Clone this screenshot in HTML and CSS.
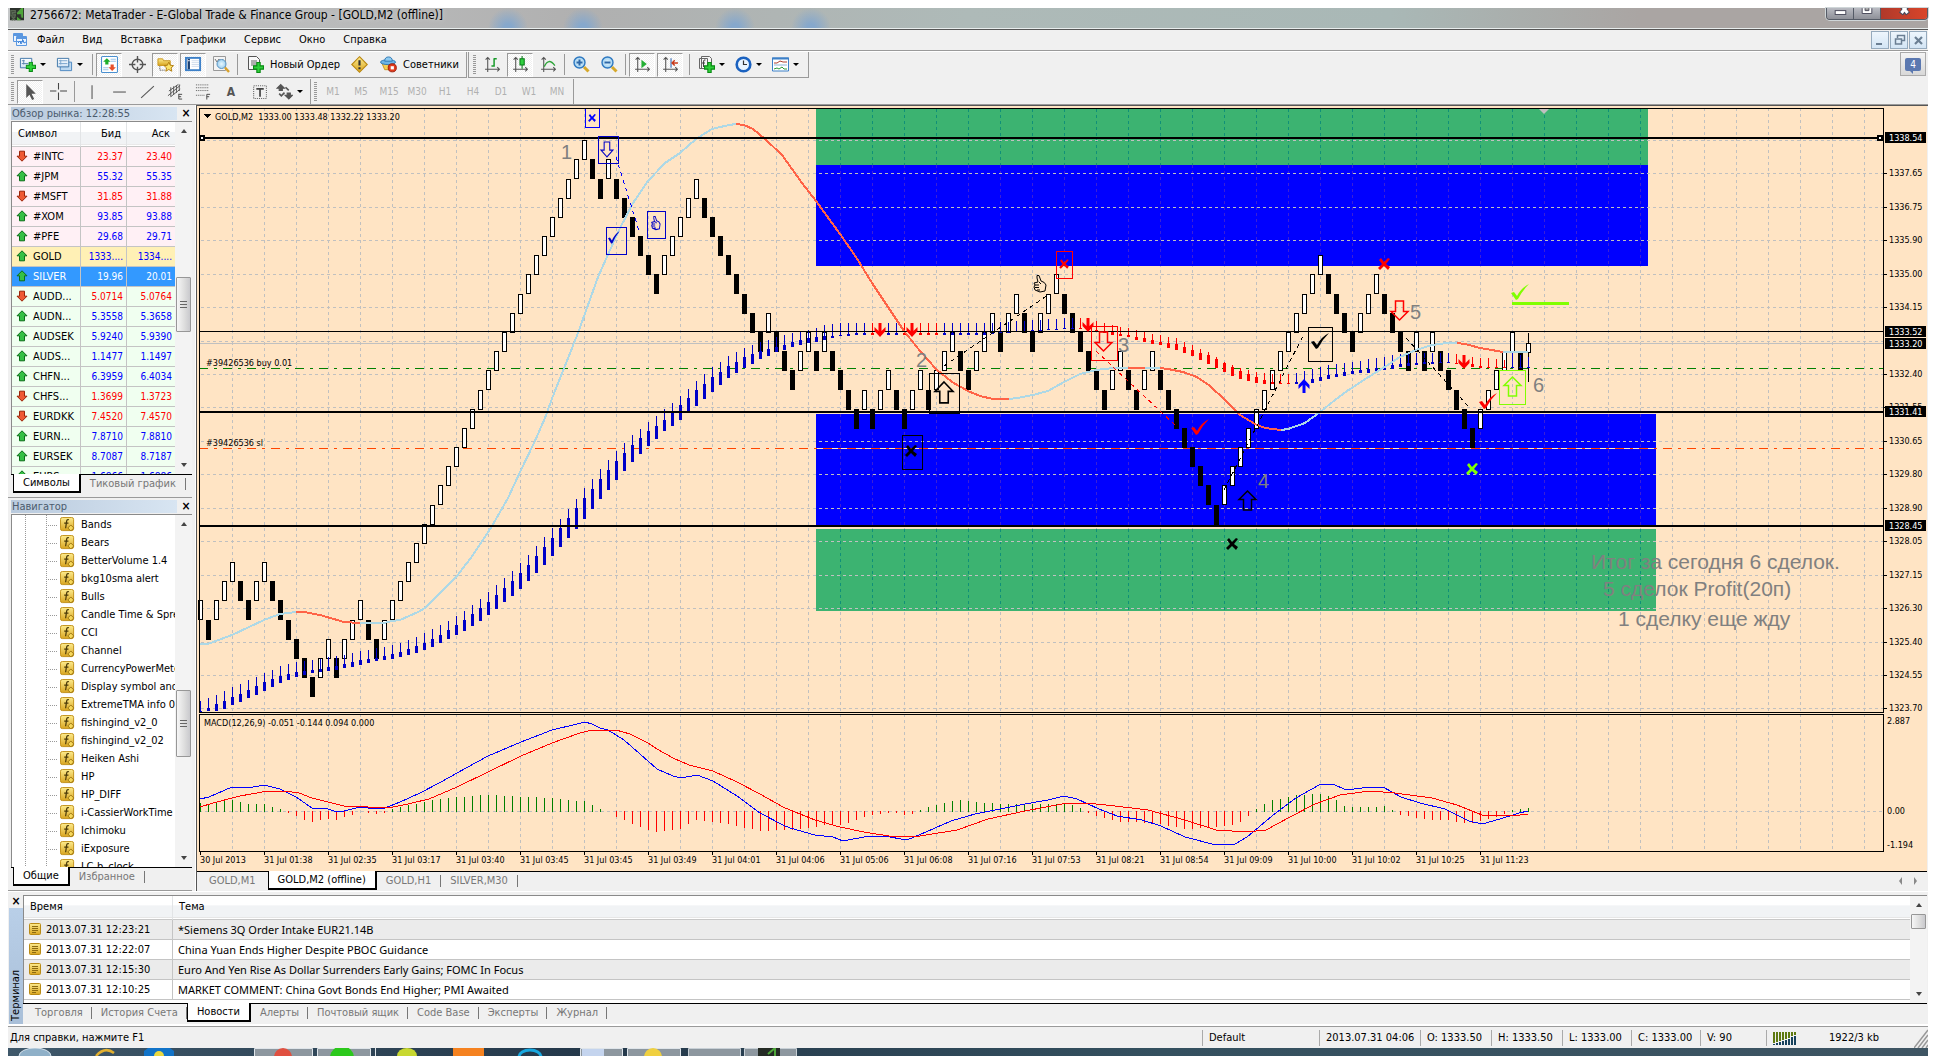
FILE: index.html
```html
<!DOCTYPE html>
<html lang="ru">
<head>
<meta charset="utf-8">
<title>2756672: MetaTrader - E-Global Trade &amp; Finance Group - [GOLD,M2 (offline)]</title>
<link rel="stylesheet" href="styles.css">
</head>
<body>
<svg class="defs" aria-hidden="true">
  <defs>
    <linearGradient id="gold" x1="0" y1="0" x2="0" y2="1"><stop offset="0" stop-color="#fdeb8c"/><stop offset="1" stop-color="#d9a520"/></linearGradient>
    <linearGradient id="pane" x1="0" y1="0" x2="0" y2="1"><stop offset="0" stop-color="#fff"/><stop offset="1" stop-color="#cfe2f5"/></linearGradient>
    <radialGradient id="lens"><stop offset="0" stop-color="#e8f8ff"/><stop offset="1" stop-color="#9fd0f0"/></radialGradient>
    <symbol id="plus" viewBox="0 0 10 10"><path d="M3.5 .5h3v3h3v3h-3v3h-3v-3h-3v-3h3z" fill="#2ed13a" stroke="#0a8a14"/></symbol>
    <symbol id="i-app" viewBox="0 0 16 16"><path d="M0 0h16v14H0z" fill="#2c322c"/><path d="M1 3h5v2H3v2h3v2H1zM8 6l5-5v9M2 10l4 4M6 10l-4 4" fill="none" stroke="#5a6a55" stroke-width="1.5"/><path d="M8 6l5-6h2v11h-2V7H8zM8 10v4h5" fill="#4ea63a"/></symbol>
    <symbol id="i-doc" viewBox="0 0 16 16"><path d="M1.500 1.500h9v8h-9zM4.500 4.500h10v9h-10z" fill="#eaf4ff" stroke="#5a97e0"/><path d="M1 3h10M4 6h11" stroke="#5a97e0" stroke-width="2"/><path d="M6 11l2-2 1 3 2-4 1 3 2-1" fill="none" stroke="#3c82d8"/></symbol>
    <symbol id="i-new" viewBox="0 0 18 16"><path d="M1.500 1.500h12v10h-12z" fill="url(#pane)" stroke="#3d75a8"/><path d="M3 4h3M5 3v5M3 7h7" stroke="#5a86b0" fill="none"/><use href="#plus" x="7" y="5" width="11" height="11"/></symbol>
    <symbol id="i-prof" viewBox="0 0 18 16"><path d="M4.500 5.500h12v9h-12z" fill="#bcd8f0" stroke="#4a86c0"/><path d="M1.500 1.500h12v9h-12z" fill="url(#pane)" stroke="#3d75a8"/><path d="M3 4h9M5 3v5M3 7h9" stroke="#7aa5cc" fill="none"/></symbol>
    <symbol id="i-mw" viewBox="0 0 16 16"><rect x=".5" y=".5" width="15" height="15" rx="1" fill="#fff" stroke="#4a90d0"/><path d="M9 3h5M9 5h5M2 11h5M2 13h5" stroke="#9cc4e8"/><path d="M5.500 2l3.500 3.500H7V8H4V5.500H2z" fill="#1fae2c"/><path d="M10.500 14L7 10.500h2V8h3v2.500h2z" fill="#e8502a"/></symbol>
    <symbol id="i-cross" viewBox="0 0 16 16"><circle cx="8" cy="8" r="5" fill="none" stroke="#555" stroke-width="1.300"/><path d="M8 0v6M8 10v6M0 8h6M10 8h6" stroke="#555" stroke-width="1.300"/></symbol>
    <symbol id="i-fold" viewBox="0 0 18 16"><path d="M1 2h5l1 2h7v5H1z" fill="url(#gold)" stroke="#c8941a"/><path d="M3 10v4h5" fill="none" stroke="#333" stroke-dasharray="1 1"/><path d="M12.500 5.500l1.500 3.300 3.500.4-2.600 2.400.8 3.500-3.200-1.800-3.200 1.800.8-3.500L7.500 9.200l3.500-.4z" fill="#fbe36a" stroke="#b07c10"/></symbol>
    <symbol id="i-nav" viewBox="0 0 18 16"><rect x="1" y="1" width="15" height="13" fill="#fff" stroke="#3d80c8" stroke-width="2"/><path d="M4 2v11" stroke="#1a3f70" stroke-width="2.500"/><path d="M7 4h8M7 6h8M7 8h8M7 10h8" stroke="#cfdcec"/><path d="M3 4h2" stroke="#fff"/></symbol>
    <symbol id="i-tester" viewBox="0 0 17 17"><path d="M.5.5h12v14H.5z" fill="#f4f4f4" stroke="#999"/><path d="M2 3l2 3 2-3 2 4 2-4" fill="none" stroke="#777"/><circle cx="8.500" cy="8" r="4.500" fill="url(#lens)" stroke="#5c96c4"/><path d="M12 11.500l4 4.500" stroke="#d9a12a" stroke-width="2.400"/></symbol>
    <symbol id="i-order" viewBox="0 0 17 17"><path d="M1.500.5h8l3 3v10h-11z" fill="#f8f8f8" stroke="#555"/><path d="M4 5h6M4 7h6M4 9h6" stroke="#666"/><use href="#plus" x="6" y="6" width="11" height="11"/></symbol>
    <symbol id="i-warn" viewBox="0 0 16 16"><path d="M8 .7L15.300 8 8 15.300.7 8z" fill="url(#gold)" stroke="#b98712"/><path d="M7 4h2v5H7zM7 10.500h2v2H7z" fill="#333"/></symbol>
    <symbol id="i-adv" viewBox="0 0 18 17"><path d="M2 7l3 7h8l2-7z" fill="#f5cf55" stroke="#c9971e"/><ellipse cx="8.500" cy="6" rx="8" ry="2.600" fill="#6db4e4" stroke="#2f78b4"/><path d="M5 5q0-4.500 4-4.500T13 5z" fill="#8dcaf0" stroke="#2f78b4"/><circle cx="13" cy="12" r="4.300" fill="#e03a1c" stroke="#9c1c08"/><path d="M11.300 10.300h3.400v3.400h-3.400z" fill="#fff"/></symbol>
    <symbol id="axes" viewBox="0 0 16 16"><path d="M3.500 1v14M1 12.500h14M1.500 3.500l2-2 2 2M12.500 10.500l2 2-2 2" fill="none" stroke="#555"/></symbol>
    <symbol id="i-bars" viewBox="0 0 16 16"><use href="#axes"/><path d="M9.500 2v8M7 9.500h2.500M9.500 2.500H12" stroke="#189a2a" stroke-width="1.400"/></symbol>
    <symbol id="i-candle" viewBox="0 0 16 16"><use href="#axes"/><path d="M9.500 0v12" stroke="#0b7a1a"/><path d="M7.500 2.500h4v6h-4z" fill="#2fd03f" stroke="#0b7a1a"/></symbol>
    <symbol id="i-line" viewBox="0 0 16 16"><use href="#axes"/><path d="M4 10q4-9 10-1" fill="none" stroke="#2fa53a" stroke-width="1.300"/></symbol>
    <symbol id="lens-b" viewBox="0 0 17 17"><circle cx="6.500" cy="6.500" r="5.500" fill="url(#lens)" stroke="#2e78c0" stroke-width="1.400"/><path d="M11 11l4.500 4.500" stroke="#d6a82a" stroke-width="3"/></symbol>
    <symbol id="i-zin" viewBox="0 0 17 17"><use href="#lens-b"/><path d="M6.500 3.500v6M3.500 6.500h6" stroke="#2e68a8" stroke-width="2"/></symbol>
    <symbol id="i-zout" viewBox="0 0 17 17"><use href="#lens-b"/><path d="M3.500 6.500h6" stroke="#2e68a8" stroke-width="2"/></symbol>
    <symbol id="i-scroll" viewBox="0 0 16 16"><use href="#axes"/><path d="M7 3.500l5 4-5 4z" fill="#25b035"/></symbol>
    <symbol id="i-shift" viewBox="0 0 16 16"><use href="#axes"/><path d="M8.500 2v9" stroke="#2a62b0"/><path d="M15 6.500h-5M12 4l-2.500 2.500L12 9" fill="none" stroke="#c83a1a" stroke-width="1.400"/></symbol>
    <symbol id="i-ind" viewBox="0 0 17 17"><path d="M3.500.5h8l2 2v10h-10zM1.500 2.500h8v10h-8z" fill="#f6f6f6" stroke="#666"/><path d="M7.500 4q-2-1-2 2v5M4 7h3" fill="none" stroke="#444"/><use href="#plus" x="6" y="6" width="11" height="11"/></symbol>
    <symbol id="i-clock" viewBox="0 0 17 17"><circle cx="8.500" cy="8.500" r="6.800" fill="#eaf5ff" stroke="#1b62c0" stroke-width="2.600"/><path d="M8.500 4.500v4h3.500" fill="none" stroke="#333" stroke-width="1.200"/></symbol>
    <symbol id="i-tpl" viewBox="0 0 17 16"><path d="M.5 1.500h16v13H.5z" fill="#fff" stroke="#3d80c8"/><path d="M0 2h17" stroke="#3d80c8" stroke-width="2"/><path d="M2 8.500h13" stroke="#8fb4d8"/><path d="M2 6.500h3l3-2 3 1h4" fill="none" stroke="#b04030"/><path d="M2 12.500l3-1 2 1 3-2 2 2h3" fill="none" stroke="#2c9a3a"/></symbol>
    <symbol id="i-cur" viewBox="0 0 16 16"><path d="M4 1l9 9H9l2.500 5-2 1L7 11l-3 3z" fill="#555"/></symbol>
    <symbol id="i-ch" viewBox="0 0 16 16"><path d="M8 0v6M8 9v7M0 7.500h6M9.500 7.500H16" stroke="#444"/></symbol>
    <symbol id="i-vl" viewBox="0 0 16 16"><path d="M8.500 2v13" stroke="#555"/></symbol>
    <symbol id="i-hl" viewBox="0 0 16 16"><path d="M2 8.500h12" stroke="#555"/></symbol>
    <symbol id="i-tl" viewBox="0 0 16 16"><path d="M2 14L14 3" stroke="#555"/></symbol>
    <symbol id="i-chan" viewBox="0 0 18 17"><path d="M1 13L14 2M2 8L12 1M4 14L14 6M4 4v10M7 3v9M10 2v8M13 1v7" stroke="#555" fill="none"/><path d="M12.500 11v5.500H16M12.500 11.500H16M12.500 14H15" stroke="#444" fill="none"/></symbol>
    <symbol id="i-fib" viewBox="0 0 18 17"><path d="M1 1.500h13M1 4.500h13M1 7.500h13M1 12.500h9" stroke="#555" stroke-dasharray="1 1"/><path d="M12.500 17v-5.500H16M12.500 14H15" stroke="#444" fill="none"/></symbol>
    <symbol id="i-lab" viewBox="0 0 16 16"><path d="M2.500 2.500h12v12h-12z" fill="none" stroke="#666" stroke-dasharray="1 1"/><path d="M5 5.500h7M8.500 5v8" stroke="#444" stroke-width="1.600"/></symbol>
    <symbol id="i-arr" viewBox="0 0 16 16"><path d="M4.500 1.500L8 5H6v2H3V5H1zM12 15l-3.500-3.500h2v-2h3v2h2z" fill="#555" stroke="#555"/><path d="M3 10l2 2 3-3M9 4l3 3" fill="none" stroke="#555" stroke-width="1.500"/></symbol>
    <symbol id="up" viewBox="0 0 12 12"><path d="M6 .8l5 5H8.500v5h-5v-5H1z" fill="#35c045" stroke="#0b6e18"/></symbol>
    <symbol id="dn" viewBox="0 0 12 12"><path d="M6 11.200l5-5H8.500v-5h-5v5H1z" fill="#ef5a35" stroke="#9a2408"/></symbol>
    <symbol id="fx" viewBox="0 0 16 16"><rect x=".5" y=".5" width="14" height="14" rx="2" fill="url(#gold)" stroke="#c08f16"/><path d="M9.500 3Q7.500 2 7 5L6 12M4.500 6.500h4.500" fill="none" stroke="#4a3a08" stroke-width="1.300"/><path d="M11.500 8.500l3.200 3.200-3.200 3.200-3.200-3.200z" fill="#f6d75a" stroke="#96700e"/></symbol>
    <symbol id="note" viewBox="0 0 12 12"><rect x=".5" y=".5" width="11" height="11" rx="1" fill="url(#gold)" stroke="#b98a14"/><path d="M3 3.500h6M3 5.500h6M3 7.500h6M3 9.500h4" stroke="#8c6a10"/></symbol>
  </defs>
</svg>

<div class="window">
  <header class="titlebar">
    <svg class="appicon"><use href="#i-app"/></svg>
    <h1>2756672: MetaTrader - E-Global Trade &amp; Finance Group - [GOLD,M2 (offline)]</h1>
    <div class="caption">
      <button aria-label="Свернуть"><svg viewBox="0 0 27 11"><rect x="8.500" y="2.500" width="11" height="4" fill="#fff" stroke="#4a4a5a"/></svg></button>
      <button aria-label="Развернуть"><svg viewBox="0 0 27 11"><path d="M8.500 0v5.500h10V0" fill="#fff" stroke="#4a4a5a"/><path d="M11.500 0v2.500h4V0" fill="#999" stroke="#4a4a5a"/></svg></button>
      <button class="close" aria-label="Закрыть"><svg viewBox="0 0 46 11"><path d="M20 -3l7 9M27 -3l-7 9" stroke="#4a4a5a" stroke-width="5"/><path d="M20.500 -3l6 8M26.500 -3l-6 8" stroke="#fff" stroke-width="3"/></svg></button>
    </div>
  </header>

  <nav class="menubar">
    <svg class="docicon"><use href="#i-doc"/></svg>
    <button>Файл</button><button>Вид</button><button>Вставка</button><button>Графики</button><button>Сервис</button><button>Окно</button><button>Справка</button>
    <div class="mdi">
      <button aria-label="Свернуть график"><svg viewBox="0 0 16 16"><path d="M4 11h6v2H4z" fill="#6b7f93"/></svg></button>
      <button aria-label="Восстановить график"><svg viewBox="0 0 16 16"><path d="M6.500 6V3.500h7v5H11M4.500 7h6v5h-6z" fill="none" stroke="#6b7f93" stroke-width="1.500"/></svg></button>
      <button aria-label="Закрыть график"><svg viewBox="0 0 16 16"><path d="M5 5l7 7M12 5l-7 7" stroke="#6b7f93" stroke-width="2.200"/></svg></button>
    </div>
  </nav>

  <div class="bars">
    <div class="barrows">
      <div class="row">
        <div class="toolbar main-tb"><i class="grip"></i>
          <button class="dd" aria-label="Новый график"><svg><use href="#i-new"/></svg></button>
          <button class="dd" aria-label="Профили"><svg><use href="#i-prof"/></svg></button><i class="sep"></i>
          <button class="on" aria-label="Обзор рынка"><svg><use href="#i-mw"/></svg></button>
          <button aria-label="Окно данных"><svg><use href="#i-cross"/></svg></button>
          <button class="on" aria-label="Навигатор"><svg><use href="#i-fold"/></svg></button>
          <button class="on" aria-label="Терминал"><svg><use href="#i-nav"/></svg></button>
          <button aria-label="Тестер стратегий"><svg><use href="#i-tester"/></svg></button><i class="sep"></i>
          <button class="txt"><svg><use href="#i-order"/></svg>Новый Ордер</button>
          <button aria-label="MetaEditor"><svg><use href="#i-warn"/></svg></button>
          <button class="txt"><svg><use href="#i-adv"/></svg>Советники</button>
        </div>
        <div class="toolbar chart-tb"><i class="grip"></i>
          <button aria-label="Бары"><svg><use href="#i-bars"/></svg></button>
          <button class="on" aria-label="Свечи"><svg><use href="#i-candle"/></svg></button>
          <button aria-label="Линия"><svg><use href="#i-line"/></svg></button><i class="sep"></i>
          <button aria-label="Приблизить"><svg><use href="#i-zin"/></svg></button>
          <button aria-label="Отдалить"><svg><use href="#i-zout"/></svg></button><i class="sep"></i>
          <button class="on" aria-label="Автопрокрутка"><svg><use href="#i-scroll"/></svg></button>
          <button class="on" aria-label="Сдвиг графика"><svg><use href="#i-shift"/></svg></button><i class="sep"></i>
          <button class="dd" aria-label="Индикаторы"><svg><use href="#i-ind"/></svg></button>
          <button class="dd" aria-label="Периоды"><svg><use href="#i-clock"/></svg></button>
          <button class="dd" aria-label="Шаблоны"><svg><use href="#i-tpl"/></svg></button>
        </div>
      </div>
      <div class="row second">
        <div class="toolbar draw-tb"><i class="grip"></i>
          <button class="on" aria-label="Курсор"><svg><use href="#i-cur"/></svg></button>
          <button aria-label="Перекрестие"><svg><use href="#i-ch"/></svg></button><i class="sep"></i>
          <button aria-label="Вертикальная линия"><svg><use href="#i-vl"/></svg></button>
          <button aria-label="Горизонтальная линия"><svg><use href="#i-hl"/></svg></button>
          <button aria-label="Трендовая линия"><svg><use href="#i-tl"/></svg></button>
          <button aria-label="Канал"><svg><use href="#i-chan"/></svg></button>
          <button aria-label="Фибоначчи"><svg><use href="#i-fib"/></svg></button>
          <button class="letter">A</button>
          <button aria-label="Метка"><svg><use href="#i-lab"/></svg></button>
          <button class="dd" aria-label="Стрелки"><svg><use href="#i-arr"/></svg></button>
        </div>
        <div class="toolbar tf-tb"><i class="grip"></i>
          <button>M1</button><button>M5</button><button>M15</button><button>M30</button><button>H1</button><button>H4</button><button>D1</button><button>W1</button><button>MN</button>
        </div>
      </div>
    </div>
    <button class="msg" aria-label="Сообщения"><span>4</span></button>
  </div>

  <main class="work">
    <aside class="side">
      <section class="dock">
        <div class="docktitle"><h2>Обзор рынка: 12:28:55</h2><button aria-label="Закрыть">×</button></div>
        <div class="dockbody">
          <div class="list market">
            <table>
              <thead><tr><th>Символ</th><th>Бид</th><th>Аск</th></tr></thead>
              <tbody>
                <tr class="st d"><td><svg><use href="#dn"/></svg>#INTC</td><td>23.37</td><td>23.40</td></tr>
                <tr class="st"><td><svg><use href="#up"/></svg>#JPM</td><td>55.32</td><td>55.35</td></tr>
                <tr class="st d"><td><svg><use href="#dn"/></svg>#MSFT</td><td>31.85</td><td>31.88</td></tr>
                <tr class="st"><td><svg><use href="#up"/></svg>#XOM</td><td>93.85</td><td>93.88</td></tr>
                <tr class="st"><td><svg><use href="#up"/></svg>#PFE</td><td>29.68</td><td>29.71</td></tr>
                <tr class="au"><td><svg><use href="#up"/></svg>GOLD</td><td>1333....</td><td>1334....</td></tr>
                <tr class="sel"><td><svg><use href="#up"/></svg>SILVER</td><td>19.96</td><td>20.01</td></tr>
                <tr class="d"><td><svg><use href="#dn"/></svg>AUDD...</td><td>5.0714</td><td>5.0764</td></tr>
                <tr><td><svg><use href="#up"/></svg>AUDN...</td><td>5.3558</td><td>5.3658</td></tr>
                <tr><td><svg><use href="#up"/></svg>AUDSEK</td><td>5.9240</td><td>5.9390</td></tr>
                <tr><td><svg><use href="#up"/></svg>AUDS...</td><td>1.1477</td><td>1.1497</td></tr>
                <tr><td><svg><use href="#up"/></svg>CHFN...</td><td>6.3959</td><td>6.4034</td></tr>
                <tr class="d"><td><svg><use href="#dn"/></svg>CHFS...</td><td>1.3699</td><td>1.3723</td></tr>
                <tr class="d"><td><svg><use href="#dn"/></svg>EURDKK</td><td>7.4520</td><td>7.4570</td></tr>
                <tr><td><svg><use href="#up"/></svg>EURN...</td><td>7.8710</td><td>7.8810</td></tr>
                <tr><td><svg><use href="#up"/></svg>EURSEK</td><td>8.7087</td><td>8.7187</td></tr>
                <tr><td><svg><use href="#up"/></svg>EURS...</td><td>1.6866</td><td>1.6886</td></tr>
              </tbody>
            </table>
          </div>
          <div class="scroll"><i class="ar u"></i><i class="space a"></i><i class="thumb"></i><i class="space b"></i><i class="ar"></i></div>
        </div>
        <div class="tabs"><button class="act">Символы</button><button>Тиковый график</button></div>
      </section>
      <section class="dock nav">
        <div class="docktitle"><h2>Навигатор</h2><button aria-label="Закрыть">×</button></div>
        <div class="dockbody">
          <ul class="list tree">
            <li><svg><use href="#fx"/></svg>Bands</li><li><svg><use href="#fx"/></svg>Bears</li><li><svg><use href="#fx"/></svg>BetterVolume 1.4</li><li><svg><use href="#fx"/></svg>bkg10sma alert</li><li><svg><use href="#fx"/></svg>Bulls</li><li><svg><use href="#fx"/></svg>Candle Time &amp; Spread</li><li><svg><use href="#fx"/></svg>CCI</li><li><svg><use href="#fx"/></svg>Channel</li><li><svg><use href="#fx"/></svg>CurrencyPowerMeter</li><li><svg><use href="#fx"/></svg>Display symbol and</li><li><svg><use href="#fx"/></svg>ExtremeTMA info 01</li><li><svg><use href="#fx"/></svg>fishingind_v2_0</li><li><svg><use href="#fx"/></svg>fishingind_v2_02</li><li><svg><use href="#fx"/></svg>Heiken Ashi</li><li><svg><use href="#fx"/></svg>HP</li><li><svg><use href="#fx"/></svg>HP_DIFF</li><li><svg><use href="#fx"/></svg>i-CassierWorkTime</li><li><svg><use href="#fx"/></svg>Ichimoku</li><li><svg><use href="#fx"/></svg>iExposure</li><li><svg><use href="#fx"/></svg>LC-b_clock</li>
          </ul>
          <div class="scroll"><i class="ar u"></i><i class="space a"></i><i class="thumb"></i><i class="space b"></i><i class="ar"></i></div>
        </div>
        <div class="tabs"><button class="act">Общие</button><button>Избранное</button></div>
      </section>
    </aside>
    <section class="chartcol">
      <svg id="chart" role="img" aria-label="GOLD,M2"></svg>
      <div class="tabs charttabs"><button>GOLD,M1</button><button class="act">GOLD,M2 (offline)</button><button>GOLD,H1</button><button>SILVER,M30</button><span class="pager"><svg viewBox="0 0 20 8"><path d="M4 0v8L1 4zM16 0v8l3-4z" fill="#888"/></svg></span></div>
    </section>
  </main>

  <section class="terminal">
    <div class="rail"><button aria-label="Закрыть">×</button><h2>Терминал</h2></div>
    <div class="termcol">
      <div class="dockbody">
        <div class="list news">
          <table>
            <thead><tr><th>Время</th><th>Тема</th></tr></thead>
            <tbody>
              <tr><td><svg><use href="#note"/></svg>2013.07.31 12:23:21</td><td>*Siemens 3Q Order Intake EUR21.14B</td></tr>
              <tr><td><svg><use href="#note"/></svg>2013.07.31 12:22:07</td><td>China Yuan Ends Higher Despite PBOC Guidance</td></tr>
              <tr><td><svg><use href="#note"/></svg>2013.07.31 12:15:30</td><td>Euro And Yen Rise As Dollar Surrenders Early Gains; FOMC In Focus</td></tr>
              <tr><td><svg><use href="#note"/></svg>2013.07.31 12:10:25</td><td>MARKET COMMENT: China Govt Bonds End Higher; PMI Awaited</td></tr>
            </tbody>
          </table>
        </div>
        <div class="scroll"><i class="ar u"></i><i class="thumb"></i><i class="space b"></i><i class="ar"></i></div>
      </div>
      <div class="tabs termtabs"><button>Торговля</button><button>История Счета</button><button class="act">Новости</button><button>Алерты</button><button>Почтовый ящик</button><button>Code Base</button><button>Эксперты</button><button>Журнал</button></div>
    </div>
  </section>

  <footer class="status">
    <span class="help">Для справки, нажмите F1</span>
    <span class="c1">Default</span><span class="c2">2013.07.31 04:06</span><span class="c3">O: 1333.50</span><span class="c3">H: 1333.50</span><span class="c4">L: 1333.00</span><span class="c4">C: 1333.00</span><span class="c5">V: 90</span>
    <span class="c6"><svg viewBox="0 0 24 13"><path d="M1 0v11M4 0v10M7 0v9M10 0v8M13 0v7M16 0v6M19 0v4M22 0v3" stroke="#5f7a10" stroke-width="2"/><path d="M1 12v1M4 11v2M7 10v3M10 9v4M13 8v5M16 7v6M19 5v8M22 4v9" stroke="#17425c" stroke-width="2"/></svg>1922/3 kb</span>
    <svg class="size" viewBox="0 0 14 20"><path d="M0 20L14 2M4 20L14 7M8 20L14 12M12 20L14 17" stroke="#999" stroke-width="1.500"/></svg>
  </footer>
  <div class="taskbar">
    <svg width="700" height="8"><ellipse cx="27" cy="8" rx="16" ry="8" fill="#8fb0c8" stroke="#d5e2ec"/><path d="M88 8q9-10 18-3" fill="none" stroke="#e2b030" stroke-width="2.500"/><path d="M136 8V3l4-3h22l4 3v5z" fill="#1173c8"/><circle cx="151" cy="8" r="5" fill="#e9d840"/><path d="M246.500 8V.5h58V8M309.500 8V.5h53V8M367.500 0v8M572.500 8V.5h42V8M619.500 8V.5h53V8" fill="#8d979f" stroke="#dfe5ea"/><circle cx="275" cy="9" r="9" fill="#e05040"/><circle cx="334" cy="10" r="12" fill="#2cc81c"/><ellipse cx="399" cy="8" rx="10" ry="8" fill="#c8d830"/><path d="M445 0h31v8h-31z" fill="#f58220"/><ellipse cx="522" cy="9" rx="11" ry="7" fill="none" stroke="#18a8e0" stroke-width="3"/><path d="M574 8V1h22v7z" fill="#c4d4ee"/><circle cx="645" cy="9" r="9" fill="#f0d040"/></svg>
    <svg width="160" height="8"><path d="M.5 8V.5h52V8M56.500 8V.5h52V8" fill="#8d979f" stroke="#c8d0d6"/><path d="M70 8V0h22v8z" fill="#252b25"/><path d="M80 6l7-6v8" stroke="#4ea63a" stroke-width="2" fill="none"/></svg>
  </div>
</div>
<script src="chart.js"></script>
</body>
</html>
```
FILE: styles.css
```css
*{box-sizing:border-box}
body{margin:0;background:#fff;font:11px/14px "DejaVu Sans Condensed","Noto Sans",sans-serif;color:#000}
button{font:inherit;color:inherit;background:none;border:0;padding:0;margin:0;white-space:nowrap}
h1,h2,ul{margin:0;padding:0;font-size:inherit;font-weight:normal}
.defs{position:absolute;width:0;height:0}
.window{display:flex;flex-direction:column;padding:8px 8px 0}
.titlebar{display:flex;align-items:flex-start;height:21px;padding-left:1px;border-bottom:1px solid #e8eded;
  background:
  radial-gradient(circle at 500px 20px,#86a8cc 4px,transparent 20px),radial-gradient(circle at 575px 20px,#86a8cc 4px,transparent 20px),
  radial-gradient(circle at 727px 20px,#86a8cc 4px,transparent 20px),radial-gradient(circle at 803px 20px,#86a8cc 4px,transparent 20px),
  radial-gradient(ellipse at 198px 22px,#5b5f62 4px,transparent 20px),radial-gradient(ellipse at 417px 22px,#a05a60 6px,transparent 20px),
  radial-gradient(ellipse at 1482px 20px,#6d8385 4px,transparent 18px),radial-gradient(ellipse at 1560px 20px,#94aed4 4px,transparent 18px),radial-gradient(ellipse at 1632px 20px,#5a6a70 3px,transparent 14px),
  linear-gradient(90deg,#c6c8c9,#b0b0b0 30%,#aebab8 50%,#a9b8b6 72%,#aaa5a3 85%,#aaa5a3)}
.appicon{width:16px;height:14px;flex:none}
.titlebar h1{font-size:12px;line-height:15px;padding-left:5px;white-space:nowrap;flex:1;text-shadow:0 0 4px #ddd}
.caption{display:flex;border:1px solid #555b66;border-top:0;border-radius:0 0 4px 4px;overflow:hidden;box-shadow:0 0 0 1px #cfd6d8}
.caption button{width:27px;height:11px;background:linear-gradient(#b9bbc2,#8e9098);border-right:1px solid #555b66}
.caption .close{width:46px;border:0;background:linear-gradient(90deg,#b0392a,#d9452a)}
.caption svg{display:block;width:100%;height:11px}
.menubar{display:flex;align-items:center;height:22px;padding:0 1px 0 4px;background:#f0f0f0;border-top:1px solid #555;border-bottom:1px solid #9a9a9a}
.docicon{width:16px;height:16px;margin-right:2px}
.menubar>button{padding:0 9px;height:18px}
.menubar>button:nth-of-type(1){padding-left:7px}
.mdi{display:flex;gap:1px;margin-left:auto}
.mdi button{width:18px;height:18px;border:1px solid #95aabd;background:linear-gradient(#eef6fd,#d3e5f5)}
.mdi svg{display:block;width:16px;height:16px}
.bars{display:flex;justify-content:space-between;align-items:flex-start;background:#f0f0f0;border-top:1px solid #fff;border-bottom:1px solid #9a9a9a}
.row{display:flex}
.toolbar{display:flex;align-items:center;height:26px;border-right:1px solid #9a9a9a;border-bottom:1px solid #9a9a9a}
.second{padding-top:1px}
.second .toolbar{height:25px;border-bottom:0}
.main-tb{width:459px}
.chart-tb{border-left:1px solid #9a9a9a;margin-left:1px;padding-right:2px}
.tf-tb{padding-right:2px}
.grip{width:3px;height:20px;margin:0 2px 0 3px;background:repeating-linear-gradient(#999 0 1px,transparent 1px 2px)}
.chart-tb .grip{margin-left:4px}
.sep{width:1px;height:21px;margin:0 2px;background:#999}
.chart-tb .sep:last-of-type{margin:0 5px}
.toolbar button{width:28px;height:24px;display:flex;align-items:center;justify-content:center;flex:none}
.toolbar svg{width:17px;height:17px;flex:none}
.toolbar button.on{width:26px;margin:0 1px;border:1px solid;border-color:#999 #fff #fff #999;background:repeating-conic-gradient(#fff 0 25%,#f0f0f0 0 50%) 0 0/2px 2px}
.toolbar button.dd{width:37px;justify-content:flex-start;padding-left:3px;gap:4px}
.dd::after{content:"";border:3px solid transparent;border-top-color:#000;border-bottom:0}
.toolbar button.txt{width:auto;padding:0 5px 0 7px;gap:6px}
.draw-tb .on{margin-right:2px}
.letter{font-weight:bold;color:#555;font-size:12px}
.tf-tb button{color:#b0b0b0;font-size:10px}
.msg{width:26px;height:24px;margin-right:2px;border:1px solid #aaa;background:linear-gradient(#f4f4f4,#d8d8d8);display:flex;align-items:center;justify-content:center}
.msg span{width:16px;height:13px;border-radius:2px;background:#5b78b0;color:#fff;line-height:13px;font-size:10px;position:relative}
.msg span::after{content:"";position:absolute;left:5px;top:13px;border:3px solid transparent;border-top-color:#5b78b0;border-right-width:0}
.work{display:grid;grid-template-columns:188px minmax(0,1fr);background:#f0f0f0}
.side{display:flex;flex-direction:column;padding-right:3px;border-right:1px solid #fff}
.dock{padding:2px 0 2px 3px;border-bottom:1px solid #9a9a9a;height:393px;display:flex;flex-direction:column}
.docktitle{display:flex;height:13px;margin-bottom:1px;justify-content:space-between}
.docktitle h2{width:166px;line-height:13px;padding-left:1px;color:#4b5b6d;background:linear-gradient(90deg,#b9cadd,#d8e5f2)}
.docktitle button,.rail button{font-weight:bold;font-size:12px;line-height:13px;width:12px}
.dockbody{display:flex;flex:1;min-height:0;border:1px solid #8a8a8a;border-right:0;border-bottom:0;background:#fff}
.list{flex:1;min-width:0;overflow:hidden}
table{border-collapse:separate;border-spacing:0;width:100%;table-layout:fixed}
th{font-weight:normal;text-align:left;height:25px;padding:0 0 1px 6px;background:linear-gradient(#fff 40%,#f1f3f5 42% 90%,#d8d8d8 92%,#fff 96%);border-right:1px solid #e2e4e6;border-bottom:1px solid #c8c8c8}
td{height:20px;padding:0;border-right:1px solid #c4c4c4;border-bottom:1px solid #c4c4c4;white-space:nowrap;overflow:hidden}
th:last-child,td:last-child{border-right:0}
.market th:nth-child(1){width:69px}
.market th:nth-child(2){width:46px}
.market th:nth-child(n+2){text-align:right;padding-right:5px}
.market td{background:#f0fff0;color:#00f;text-align:right;padding-right:3px;font-size:10px}
.market td:first-child{text-align:left;color:#000;padding-left:4px;font-size:11px}
.market td:first-child svg{margin-right:5px}
.market svg{width:12px;height:12px;vertical-align:-2px}
.market .d td:nth-child(n+2){color:#f00}
.market .st td{background:#fff0f5}
.market .au td{background:#fff0b5}
.market .sel td,.market .sel td:first-child{background:#3399ff;color:#fff}
.scroll{width:17px;flex:none;display:flex;flex-direction:column;align-items:center;background:#f3f3f3;padding:6px 1px}
.ar{border:3px solid transparent;border-top:4px solid #444;border-bottom:0;margin:1px}
.ar.u{border-top:0;border-bottom:4px solid #444}
.thumb{width:15px;border:1px solid #979797;border-radius:1px;background:repeating-linear-gradient(#666 0 1px,transparent 1px 3px) center/7px 8px no-repeat,linear-gradient(90deg,#f6f6f6,#dcdcdc 60%,#c9c9cd)}
.market+.scroll .a{flex:144}.market+.scroll .thumb{height:55px}.market+.scroll .b{flex:130}
.tree+.scroll .a{flex:164}.tree+.scroll .thumb{height:67px}.tree+.scroll .b{flex:98}
.news+.scroll .thumb{height:15px;margin-top:6px;background:linear-gradient(90deg,#f6f6f6,#dcdcdc 60%,#c9c9cd)}
.news+.scroll .b{flex:1}
.tabs{display:flex;align-items:center;height:20px;padding-bottom:2px;border-top:1px solid #000;color:#777}
.tabs button{height:12px;line-height:12px;padding:0 9px;border-right:1px solid #777}
.tabs .act{align-self:flex-start;height:19px;line-height:17px;padding:0 9px;margin:-1px 0 0 2px;border:solid #000;border-width:0 2px 2px 1px;background:#fff;color:#000}
.dock .tabs{margin-bottom:1px;flex:none}
.tree{list-style:none;background:repeating-linear-gradient(#999 0 1px,transparent 1px 2px) 13px 0/1px 100% no-repeat,repeating-linear-gradient(#999 0 1px,transparent 1px 2px) 34px 0/1px 100% no-repeat #fff}
.tree li{height:18px;line-height:18px;margin-left:36px;padding-left:12px;white-space:nowrap;overflow:hidden;background:repeating-linear-gradient(90deg,#999 0 1px,transparent 1px 2px) 0 9px/10px 1px no-repeat}
.tree li:first-child{margin-top:1px}
.tree svg{width:15px;height:15px;vertical-align:-4px;margin-right:6px}
.chartcol{border-left:1px solid #555;border-top:1px solid #555;padding-right:1px}
#chart{display:block;width:100%;height:765px;background:#ffe4c4;font-family:"DejaVu Sans Condensed","Noto Sans",sans-serif;font-size:9px;shape-rendering:crispEdges}
.charttabs{padding-left:3px}
.charttabs .act{margin-left:0}
.charttabs button:not(.act):first-child{border-right:0;padding-right:12px}
.charttabs button{padding:0 9px}
.pager{margin:0 9px 0 auto}
.pager svg{width:20px;height:8px;display:block}
.terminal{display:flex;background:#f0f0f0;padding:3px 1px 0 1px;border-top:1px solid #fff;border-bottom:2px solid #fff}
.rail{width:14px;display:flex;flex-direction:column;align-items:center}
.rail h2{flex:1;writing-mode:vertical-rl;transform:rotate(180deg);line-height:14px;padding-top:3px;background:linear-gradient(#a9bfd8,#b9cfe8)}
.termcol{flex:1;min-width:0}
.termcol .dockbody{height:108px;flex:none}
.news th:first-child{width:149px}
.news th{height:24px}
.news td{padding-left:5px}
.news td:last-child{font-family:"Noto Sans",sans-serif}
.news tbody tr:nth-child(odd) td{background:#ebebeb}
.news svg{width:12px;height:12px;vertical-align:-2px;margin-right:5px}
.termtabs{height:21px;padding-bottom:3px}
.termtabs button{padding:0 8px 0 9px}
.termtabs button:first-child{padding-left:12px}
.termtabs .act{margin-left:0}
.status{display:flex;align-items:center;height:22px;padding-top:1px;background:#f0f0f0;border-top:1px solid #9a9a9a}
.status span{line-height:16px;padding-left:6px;border-left:1px solid #aaa;white-space:nowrap}
.status .help{flex:1;border:0;padding-left:2px}
.c1{width:117px}
.c2{width:101px}
.c3{width:71px}
.c4{width:69px}
.c5{width:66px}
.c6{width:148px;display:flex;align-items:center;gap:32px}
.c6 svg{width:24px;height:13px}
.size{width:14px;height:20px}
.taskbar{display:flex;gap:0;height:8px;overflow:hidden;background:linear-gradient(90deg,#3f586a,#24384a 30%,#34505f 60%,#3e5563)}
.taskbar svg{flex:none;margin-right:-20px}
```
FILE: chart.js
```js
// Price chart, MACD pane and the trader's marks. Bars are 8px apart; X0/Y0 is the chart's corner in window space.
(function () {
  var svg = document.getElementById('chart');
  var X0 = 197, Y0 = 106, LEFT = 199, STEP = 8;
  var ZERO = 811, TOP = 108, MID = 712, MACD_TOP = 714, BOTTOM = 851;
  var BLUE = '#0000c8', RED = '#ff0000', LIME = '#80ff00', GRAY = '#808080';
  var GRID_Y = [140, 173, 207, 240, 274, 307, 341, 374, 407, 441, 474, 508, 541, 575, 608, 642, 675, 708];
  var PRICES = ['', '1337.65', '1336.75', '1335.90', '1335.00', '1334.15', '', '1332.40', '1331.55', '1330.65', '1329.80', '1328.90', '1328.05', '1327.15', '1326.30', '1325.40', '1324.55', '1323.70'];
  var TIMES = ['30 Jul 2013', '31 Jul 01:38', '31 Jul 02:35', '31 Jul 03:17', '31 Jul 03:40', '31 Jul 03:45', '31 Jul 03:45', '31 Jul 03:49', '31 Jul 04:01', '31 Jul 04:06', '31 Jul 05:06', '31 Jul 06:08', '31 Jul 07:16', '31 Jul 07:53', '31 Jul 08:21', '31 Jul 08:54', '31 Jul 09:09', '31 Jul 10:00', '31 Jul 10:02', '31 Jul 10:25', '31 Jul 11:23'];
  // Brick runs: positive = rising, negative = falling.
  var RUNS = [-1, 3, -2, 2, -6, 2, -1, 3, -2, 26, -2, 1, -6, 5, -8, 1, -3, 2, -1, 1, -4, 1, -1, 2, -2, 2, -1, 3, -2, 3, -1, 2, -2, 3, -6, 2, -2, 2, -8, 13, -4, 3, -4, 1, -1, 1, -5, 5, -1];
  var MA = [
    ['#add8e6', [200,644, 208,644, 232,635, 264,620, 280,614, 296,612]],
    ['#ff6347', [296,612, 304,612, 320,615, 344,622, 360,623]],
    ['#add8e6', [360,623, 384,623, 392,621, 400,620, 418,612, 425,608, 433,600, 457,576, 473,555, 492,526, 508,498, 521,470, 534,443, 545,418, 553,396, 578,333, 598,277, 619,230, 633,203, 648,181, 665,163, 680,153, 696,139, 712,129, 729,125, 736,124]],
    ['#ff6347', [736,124, 744,125, 753,129, 765,139, 782,155, 802,183, 816,201, 840,234, 856,257, 872,283, 888,307, 904,331, 920,351, 936,369, 952,382, 968,391, 980,396, 993,399, 1009,399]],
    ['#add8e6', [1009,399, 1017,398, 1033,395, 1048,391, 1064,382, 1080,374, 1096,370, 1113,368, 1128,368]],
    ['#ff6347', [1128,368, 1145,368]], ['#add8e6', [1145,368, 1160,368]],
    ['#ff6347', [1160,368, 1168,369, 1183,372, 1197,377, 1210,386, 1225,400, 1240,415, 1255,424, 1265,428, 1281,430]],
    ['#add8e6', [1281,430, 1288,429, 1305,423, 1320,412, 1335,400, 1347,391, 1367,378, 1383,368, 1400,357, 1416,350, 1432,345, 1447,343, 1457,343]],
    ['#ff6347', [1457,343, 1465,344, 1480,348, 1503,352]], ['#add8e6', [1503,352, 1528,352]]
  ];
  // Trend bars: index, wick top, body top, body bottom.
  var TREND = [[0,701,711,712],[1,698,708,711],[2,695,704,711],[3,691,701,709],[4,687,697,705],[6,680,690,698],[8,673,682,691],[10,666,676,683],[12,662,672,677],[14,660,670,673],[16,657,667,671],[18,655,664,668],[20,651,660,665],[22,648,658,661],[24,645,654,659],[26,640,649,655],[28,633,643,650],[30,625,635,643],[32,616,625,635],[34,605,614,626],[36,592,602,615],[38,578,588,602],[40,563,573,589],[42,546,556,573],[44,528,538,556],[46,509,518,538],[48,488,498,519],[50,469,479,499],[52,451,461,480],[54,435,445,462],[56,422,431,446],[58,409,420,431],[60,396,405,420],[62,381,390,406],[64,367,377,392],[66,356,366,378],[68,348,357,368],[70,342,351,359],[72,337,347,352],[74,333,342,347],[76,330,338,343],[78,325,336,340],[80,323,335,336],[82,323,333,335],[98,323,333,335],[100,322,332,333],[104,320,330,331],[108,318,328,329],[110,318,328,329],[112,321,330,331],[114,325,332,335],[116,328,335,337],[118,332,338,342],[120,335,342,345],[122,338,344,350],[124,345,350,356],[126,352,355,364],[128,362,363,372],[130,368,371,379],[132,372,377,383],[134,374,382,384],[136,374,383,384],[137,373,382,384],[139,369,379,383],[141,365,375,379],[144,362,371,374],[147,358,368,372],[150,354,364,367],[153,353,362,364],[156,353,362,363],[157,354,363,364],[159,357,364,367],[161,358,367,368],[163,360,367,368],[164,353,367,368],[166,357,367,368]];
  var MACD = [200,799,209,797,232,787,248,788,264,785,280,789,296,797,312,808,328,809,337,812,344,811,360,807,376,809,385,808,400,802,420,793,441,782,466,768,488,756,521,742,552,730,573,725,585,722,592,724,600,728,608,730,624,740,640,754,657,769,673,776,681,778,697,775,713,781,737,796,760,813,783,825,790,828,815,835,833,837,843,841,864,837,884,836,907,840,926,832,951,821,975,814,1000,809,1025,804,1048,800,1064,796,1077,799,1099,809,1117,816,1142,820,1161,826,1185,837,1216,845,1235,844,1247,837,1272,816,1296,798,1319,785,1333,784,1346,790,1370,787,1383,787,1401,797,1420,803,1445,809,1469,821,1482,824,1500,819,1519,813,1528,811];
  var SIGNAL = [200,807,213,803,240,796,268,791,284,791,299,793,312,798,344,806,368,807,393,807,408,804,429,799,457,787,488,772,521,756,552,743,580,733,592,730,616,730,630,734,648,743,657,749,673,758,689,765,713,771,737,782,760,794,783,807,790,810,815,820,840,827,864,832,895,837,920,836,957,830,988,819,1025,811,1062,804,1087,803,1115,806,1148,810,1185,820,1216,830,1247,832,1266,830,1290,817,1315,804,1340,795,1370,791,1395,793,1432,798,1457,805,1482,815,1512,816,1528,814];

  function at(list, x) {
    for (var i = 2; i < list.length; i += 2) if (x <= list[i]) {
      var t = (x - list[i - 2]) / (list[i] - list[i - 2]);
      return list[i - 1] + t * (list[i + 1] - list[i - 1]);
    }
    return list[list.length - 1];
  }
  function rect(x, y, w, h, fill, extra) { return '<rect x="' + x + '" y="' + y + '" width="' + w + '" height="' + h + '" fill="' + fill + '" ' + (extra || '') + '/>'; }
  function line(x1, y1, x2, y2, color, extra) { return '<path d="M' + x1 + ' ' + y1 + 'L' + x2 + ' ' + y2 + '" stroke="' + color + '" fill="none" ' + (extra || '') + '/>'; }
  function text(x, y, s, extra) { return '<text x="' + x + '" y="' + y + '" ' + (extra || '') + '>' + s + '</text>'; }
  function poly(list, color, w) { return '<polyline points="' + list.join(' ') + '" fill="none" stroke="' + color + '" stroke-width="' + w + '"/>'; }
  function box(x, y, w, h, c) { return rect(x + .5, y + .5, w - 1, h - 1, 'none', 'stroke="' + c + '"'); }
  function mark(d, x, y, attrs) { return '<path transform="translate(' + x + ' ' + y + ')" d="' + d + '" ' + attrs + '/>'; }
  var CHECK = 'M0 9L3 8L6 12Q10 4 18 0Q11 7 7 15L5 16Z';
  var CROSS = 'M-5 -4L-3 -6L0 -2L4 -6L6 -5L2 0L6 3L4 6L0 2L-4 6L-6 4L-2 0Z';
  var ARROW = 'M8.500 0L17 8.500H12.500V19H4.500V8.500H0Z';
  var SOLID = 'M-1.500 -7H1.500V1L5.500 -3V1L0 7L-5.500 1V-3L-1.500 1Z';
  var HAND = 'M4 .5L6 .5L8 6Q12 7 13 10L12 16L7 17L2 15L1 12L2 10L1 8L5 7L4 3ZM2 10H6M2 12.500H6M4 15H7M6 7L8 9';
  function check(x, y, c) { return mark(CHECK, x, y, 'fill="' + c + '"'); }
  function cross(x, y, c) { return mark(CROSS, x, y, 'fill="' + c + '"'); }
  function arrow(x, y, c, down) { return '<path transform="translate(' + x + ' ' + y + ')' + (down ? ' rotate(180 8.5 9.5)' : '') + '" d="' + ARROW + '" fill="none" stroke="' + c + '" stroke-width="1.500"/>'; }

  function draw() {
    var R = X0 + svg.clientWidth - 44, s = '', i, x;
    var zones = [[816, 109, 832, 56, '#3cb371', '#109078'], [816, 165, 832, 101, '#0000ff', '#3a1fd8'], [816, 414, 840, 111, '#0000ff', '#3a1fd8'], [816, 529, 840, 82, '#3cb371', '#109078']];
    var dash = 'stroke-dasharray="3 3"', dashdot = 'stroke-dasharray="9 6 3 6"';
    for (i = 0; i < 4; i++) s += rect(zones[i][0], zones[i][1], zones[i][2], zones[i][3], zones[i][4]);
    for (x = 232; x < R; x += 32) s += line(x + .5, TOP, x + .5, MID, '#c0c0c0', dash) + line(x + .5, MACD_TOP, x + .5, BOTTOM, '#c0c0c0', dash);
    zones.forEach(function (z) {
      for (x = 840; x < z[0] + z[2]; x += 32) s += line(x + .5, z[1], x + .5, z[1] + z[3], z[4]) + line(x + .5, z[1], x + .5, z[1] + z[3], z[5], dash);
    });
    GRID_Y.forEach(function (g) { s += line(LEFT + 2, g + .5, R, g + .5, '#c0c0c0', dash); });
    s += line(LEFT, ZERO + .5, R, ZERO + .5, '#c0c0c0', dash);
    s += line(LEFT, 343.5, R, 343.5, '#c0c0c0');
    s += line(LEFT, 368.5, R, 368.5, '#008000', dashdot) + rect(816, 448, 840, 1, '#ffe4c4') + line(LEFT, 448.5, R, 448.5, '#ff4500', dashdot);

    // Renko bricks
    var level = 24, n = 0;
    function brick(up) {
      var bx = 200 + n * STEP, by = Math.round(140.3 + level * 19.17);
      s += up ? rect(bx - 1.5, by + .5, 4, 19, '#fff', 'stroke="#000"') : rect(bx - 2, by, 5, 20, '#000');
      n++;
    }
    brick(true);
    RUNS.forEach(function (r) {
      for (var k = Math.abs(r); k > 0; k--) { level += r > 0 ? -1 : 1; brick(r > 0); }
    });
    s += line(1528.5, 333, 1528.5, 382, '#000') + rect(1526.5, 343.5, 4, 9, '#fff', 'stroke="#000"');

    // Trend bars
    for (i = 0; i <= 166; i++) {
      var j = 1; while (TREND[j][0] < i) j++;
      var a = TREND[j - 1], b = TREND[j], t = (i - a[0]) / (b[0] - a[0]), v = [1, 2, 3].map(function (q) { return Math.round(a[q] + t * (b[q] - a[q])); });
      var c = (i === 84 || i === 85 || (i >= 88 && i <= 92) || (i >= 110 && i <= 136) || (i >= 157 && i <= 163)) ? RED : BLUE;
      x = 200 + i * STEP;
      s += rect(x, v[0], 1, v[2] - v[0], c) + rect(x - 1, v[1], 3, Math.max(1, v[2] - v[1]), c);
    }
    MA.forEach(function (m) { s += poly(m[1], m[0], 2); });

    // Horizontal levels
    s += rect(LEFT, 137, R - LEFT, 2, '#000') + rect(LEFT, 331, R - LEFT, 1, '#000') + rect(LEFT, 411, R - LEFT, 2, '#000') + rect(LEFT, 525, R - LEFT, 2, '#000');
    [201, R - 4].forEach(function (hx) { s += rect(hx - 1, 136, 4, 4, '#fff', 'stroke="#000" stroke-width="2"'); });

    // Trade links
    var link = 'stroke-dasharray="4 4"';
    s += line(616, 157, 639, 231, '#0000ff', link) + line(944, 366, 1048, 295, '#000', link) + line(1096, 351, 1176, 426, '#f00', link) + line(1224, 490, 1304, 334, '#000', link) + line(1406, 338, 1469, 407, '#000', link);

    // Marks
    s += '<g shape-rendering="auto">' +
      box(585, 108, 15, 20, '#0000ff') + '<g transform="translate(592 118) scale(.65)">' + cross(0, 0, '#0000ff') + '</g>' +
      box(598, 136, 21, 28, BLUE) + '<g transform="translate(601 142) scale(.7 .78)">' + arrow(0, 0, BLUE, 1) + '</g>' +
      box(606, 227, 21, 28, BLUE) + '<g transform="translate(608 231) scale(.65 .8)">' + check(0, 0, BLUE) + '</g>' +
      box(647, 211, 19, 28, BLUE) + '<g transform="translate(651 216) scale(.7 .8)">' + mark(HAND, 0, 0, 'fill="none" stroke="' + BLUE + '" stroke-width="1.300"') + '</g>' +
      box(929, 373, 31, 41, '#000') + '<g transform="translate(935 382) scale(1.060 1.100)">' + arrow(0, 0, '#000') + '</g>' +
      box(902, 435, 21, 35, '#000') + cross(911, 451, '#000') +
      box(1056, 251, 17, 28, RED) + '<g transform="translate(1064 264) scale(.8)">' + cross(0, 0, RED) + '</g>' +
      mark(HAND, 1033, 275, 'fill="none" stroke="#000"') +
      mark(SOLID, 880, 330, 'fill="' + RED + '"') + mark(SOLID, 912, 330, 'fill="' + RED + '"') + mark(SOLID, 1088, 325, 'fill="' + RED + '"') + mark(SOLID, 1464, 362, 'fill="' + RED + '"') +
      '<path transform="translate(1304 386) rotate(180)" d="' + SOLID + '" fill="#0000ff"/>' +
      box(1091, 326, 27, 35, RED) + arrow(1095, 332, RED, 1) +
      check(1191, 419, RED) + arrow(1239, 491, '#000') + cross(1232, 544, '#000') +
      box(1308, 327, 25, 35, '#000') + check(1311, 333, '#000') +
      cross(1384, 264, RED) + arrow(1391, 301, RED, 1) +
      check(1479, 393, RED) + box(1499, 370, 27, 35, LIME) + arrow(1504, 377, LIME) + cross(1472, 469, LIME) +
      check(1511, 284, LIME) + rect(1512, 302, 57, 3, LIME) +
      '<path d="M1538 108h12l-6 6z" fill="#c0c0c0"/></g>';
    var num = 'fill="' + GRAY + '" font-family="Liberation Sans" font-size="20"';
    [[561, 159, 1], [916, 367, 2], [1118, 352, 3], [1258, 488, 4], [1410, 319, 5], [1533, 392, 6]].forEach(function (q) { s += text(q[0], q[1], q[2], num); });
    var note = 'fill="' + GRAY + '" font-family="Liberation Sans" font-size="21"';
    s += text(1591, 569, 'Итог за сегодня 6 сделок.', note) + text(1603, 596, '5 сделок Profit(20п)', note) + text(1618, 626, '1 сделку еще жду', note);

    // MACD pane
    s += rect(LEFT, MID, R - LEFT, 3, '#ffe4c4');
    for (i = 0; i <= 166; i++) {
      x = 200 + i * STEP;
      var h = Math.round(at(SIGNAL, x) - at(MACD, x));
      if (h > 0) s += rect(x, ZERO - h, 1, h + 1, '#008000'); else if (h < 0) s += rect(x, ZERO, 1, 1 - h, RED);
    }
    s += poly(MACD, '#0000ff', 1) + poly(SIGNAL, '#ff0000', 1);
    s += box(LEFT, TOP, R - LEFT + 1, MID - TOP + 1, '#000') + box(LEFT, MACD_TOP, R - LEFT + 1, BOTTOM - MACD_TOP + 1, '#000');

    // Captions and scales
    s += '<path d="M203 114h8l-4 4z"/>' + text(215, 120, 'GOLD,M2&#160; 1333.00 1333.48 1332.22 1333.20') + text(204, 726, 'MACD(12,26,9) -0.051 -0.144 0.094 0.000');
    s += text(206, 366, '#39426536 buy 0.01') + text(206, 446, '#39426536 sl');
    PRICES.forEach(function (p, k) { if (p) s += rect(R + 1, GRID_Y[k], 3, 1, '#000') + text(R + 6, GRID_Y[k] + 3, p); });
    [[137, '1338.54'], [331, '1333.52'], [343, '1333.20'], [411, '1331.41'], [525, '1328.45']].forEach(function (p) {
      s += rect(R + 2, p[0] - 5, 41, 11, '#000') + text(R + 6, p[0] + 4, p[1], 'fill="#fff"');
    });
    s += text(R + 4, 724, '2.887') + text(R + 4, 814, '0.00') + text(R + 4, 848, '-1.194');
    TIMES.forEach(function (p, k) { s += rect(200 + 64 * k, BOTTOM, 1, 4, '#000') + text(200 + 64 * k, 863, p); });
    svg.innerHTML = '<g transform="translate(' + -X0 + ' ' + -Y0 + ')">' + s + '</g>';
  }
  draw();
  window.addEventListener('resize', draw);
})();
```
